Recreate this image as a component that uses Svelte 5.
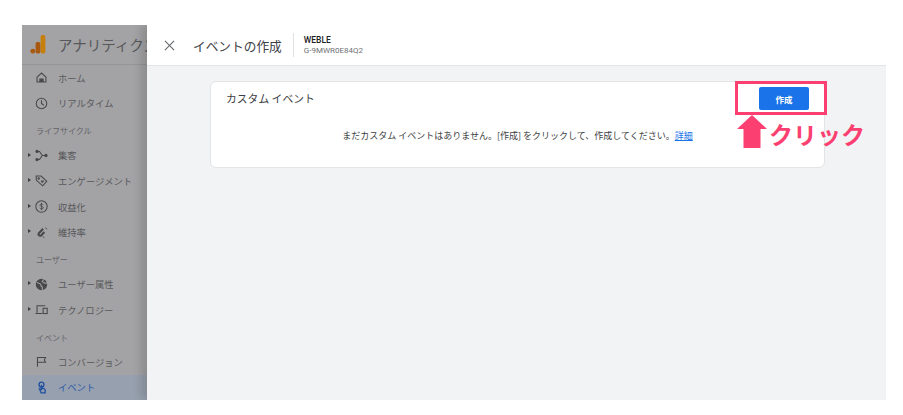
<script lang="ts">
  interface NavItem { kind: 'label' | 'item'; text: string; icon?: string; arrow?: boolean; active?: boolean }

  const nav: NavItem[] = [
    { kind: 'item', text: 'ホーム', icon: 'home' },
    { kind: 'item', text: 'リアルタイム', icon: 'clock' },
    { kind: 'label', text: 'ライフサイクル' },
    { kind: 'item', text: '集客', icon: 'acq', arrow: true },
    { kind: 'item', text: 'エンゲージメント', icon: 'tag', arrow: true },
    { kind: 'item', text: '収益化', icon: 'dollar', arrow: true },
    { kind: 'item', text: '維持率', icon: 'magnet', arrow: true },
    { kind: 'label', text: 'ユーザー' },
    { kind: 'item', text: 'ユーザー属性', icon: 'globe', arrow: true },
    { kind: 'item', text: 'テクノロジー', icon: 'devices', arrow: true },
    { kind: 'label', text: 'イベント' },
    { kind: 'item', text: 'コンバージョン', icon: 'flag' },
    { kind: 'item', text: 'イベント', icon: 'touch', active: true },
  ];
</script>

<div class="shot">
  <aside class="sidebar">
    <div class="brand">
      <svg class="logo" viewBox="0 0 18 22" width="16" height="19">
        <rect x="12" y="0" width="5.500" height="21.500" rx="2" fill="#c77f0c" />
        <rect x="6.200" y="8" width="5.500" height="13.500" rx="2" fill="#a8590f" />
        <circle cx="3" cy="18.700" r="2.800" fill="#a8590f" />
      </svg>
      <span class="brand-name">アナリティクス</span>
    </div>
    <nav class="nav">
      {#each nav as n}
        {#if n.kind === 'label'}
          <div class="nav-label">{n.text}</div>
        {:else}
          <div class="nav-item" class:active={n.active}>
            {#if n.arrow}<span class="caret"></span>{/if}
            <svg class="nav-icon" viewBox="0 0 16 16" width="13" height="13" fill="none" stroke="currentColor" stroke-width="1.300">
              {#if n.icon === 'home'}
                <path d="M2.500 7.500 8 2.500l5.500 5v6h-11z" /><path d="M6 13.500V10h4v3.500" fill="currentColor" />
              {:else if n.icon === 'clock'}
                <circle cx="8" cy="8" r="6.500" /><path d="M8 4V8l2.800 2.200" />
              {:else if n.icon === 'acq'}
                <path d="M3 3h2.500L9 8l-3.500 5H3M9 8h4" /><circle cx="13.500" cy="8" r="1.400" fill="currentColor" /><circle cx="2.500" cy="3" r="1.400" fill="currentColor" /><circle cx="2.500" cy="13" r="1.400" fill="currentColor" />
              {:else if n.icon === 'tag'}
                <path d="M1.500 2.500h6l7 6.500-5 5.500-8-7z" /><circle cx="4.500" cy="5.500" r=".8" fill="currentColor" /><path d="M7 9l2 2 2.200-2.200-1.200-1-.9.800-.9-.800z" fill="currentColor" stroke="none" />
              {:else if n.icon === 'dollar'}
                <circle cx="8" cy="8" r="7" /><path d="M10.200 6C9.900 4.800 6 4.400 6 6.400c0 2 4.200 1 4.200 3.200 0 1.900-3.800 1.500-4.300.2M8 3.500v9" stroke-width="1" />
              {:else if n.icon === 'magnet'}
                <path d="M10 3.500 5 8.500c-2 2 .8 4.800 2.800 2.800l3.700-3.800" stroke-width="2.600" /><path d="M13 2l1.600 2M9.500 13l2 1.500" stroke-width="1.200" />
              {:else if n.icon === 'globe'}
                <circle cx="8" cy="8" r="7" fill="currentColor" stroke="none" /><path d="M2.500 5.500 7 7.500l.5 2.500 1.500 1v4M10.500 1.500 9 4.500l3 2 3-.5" stroke="#a3a3a5" />
              {:else if n.icon === 'devices'}
                <path d="M2.500 12V3.500h10M.5 13h8.500" /><rect x="10" y="6.500" width="5" height="6.500" />
              {:else if n.icon === 'flag'}
                <path d="M3 14.500V3h10l-1.500 3 1.500 3H3" />
              {:else if n.icon === 'touch'}
                <circle cx="8" cy="4.500" r="3" stroke-width="1.600" /><path d="M8 4.500v6l-2.500-.8 2 4.800h5v-3.500c0-1-1-1.500-2-1.700L8 8.500" stroke-width="1.600" />
              {/if}
            </svg>
            <span>{n.text}</span>
          </div>
        {/if}
      {/each}
    </nav>
  </aside>

  <main class="panel">
    <header class="head">
      <svg class="close" viewBox="0 0 12 12" width="11" height="11" fill="none" stroke="#5f6368" stroke-width="1.100">
        <path d="M1 1l10 10M11 1 1 11" />
      </svg>
      <h1>イベントの作成</h1>
      <div class="prop">
        <strong>WEBLE</strong>
        <small>G-9MWR0E84Q2</small>
      </div>
    </header>
    <section class="body">
      <div class="card">
        <div class="card-top">
          <h2>カスタム イベント</h2>
          <button type="button">作成</button>
        </div>
        <p>まだカスタム イベントはありません。[作成] をクリックして、作成してください。<a href="#top">詳細</a></p>
      </div>
    </section>
  </main>

  <div class="mark"></div>
  <svg class="arrow" viewBox="0 0 30 33" width="30" height="33"><path d="M15 0 30 14H23.500V33H6.500V14H0z" fill="#fb3f71" /></svg>
  <div class="click">クリック</div>
</div>

<style>
  :global(body) {
    margin: 0;
    background: #fff;
    font-family: "Noto Sans CJK JP", Roboto, sans-serif;
  }
  .shot {
    position: relative;
    display: flex;
    width: 864px;
    height: 375px;
    margin: 25px 0 0 22px;
    overflow: hidden;
  }
  .sidebar {
    width: 125px;
    flex-shrink: 0;
    background: #a3a3a5;
    color: #58585b;
    overflow: hidden;
  }
  .brand {
    display: flex;
    align-items: center;
    gap: 12px;
    height: 40px;
    padding-left: 8px;
    border-bottom: 1px solid #959597;
    box-sizing: border-box;
    white-space: nowrap;
  }
  .logo { flex-shrink: 0; }
  .brand-name { font-size: 14.500px; color: #58585b; }
  .nav-item {
    position: relative;
    display: flex;
    align-items: center;
    gap: 10px;
    height: 25.600px;
    padding-left: 13px;
    font-size: 9.300px;
    white-space: nowrap;
  }
  .nav-item.active { background: #97a0ae; color: #2a5aa8; }
  .nav-icon { flex-shrink: 0; color: #48484b; }
  .active .nav-icon { color: #1f4fa0; }
  .caret {
    position: absolute;
    left: 6px;
    top: 10px;
    border-left: 3.500px solid #3f3f42;
    border-top: 2.500px solid transparent;
    border-bottom: 2.500px solid transparent;
  }
  .nav-label {
    height: 26.400px;
    box-sizing: border-box;
    padding: 4px 0 0 14px;
    line-height: 22.400px;
    font-size: 8px;
    color: #626265;
  }
  .panel {
    flex: 1;
    display: flex;
    flex-direction: column;
    min-width: 0;
    box-shadow: -6px 0 8px rgba(0, 0, 0, 0.14);
    z-index: 1;
  }
  .head {
    display: flex;
    align-items: center;
    height: 41px;
    flex-shrink: 0;
    padding-left: 17px;
    background: #fff;
    border-bottom: 1px solid #e3e4e6;
    box-sizing: border-box;
  }
  .close { flex-shrink: 0; }
  h1 {
    margin: 0 0 0 18px;
    font-size: 12.700px;
    font-weight: 400;
    color: #3c4043;
  }
  .prop {
    display: flex;
    flex-direction: column;
    margin-left: 11px;
    padding-left: 10px;
    border-left: 1px solid #e0e0e0;
    height: 24px;
    justify-content: center;
    font-family: Roboto, sans-serif;
  }
  .prop strong { font-size: 8.500px; line-height: 11px; color: #202124; font-weight: 500; }
  .prop small { font-size: 8px; line-height: 10px; color: #6f7276; }
  .body {
    flex: 1;
    background: #f1f3f4;
    padding: 15px 0 0 63px;
  }
  .card {
    width: 615px;
    height: 87px;
    box-sizing: border-box;
    background: #fff;
    border: 1px solid #e3e4e6;
    border-radius: 6px;
    padding: 8px 15px 0;
  }
  .card-top {
    display: flex;
    justify-content: space-between;
    align-items: flex-start;
  }
  h2 {
    margin: 0;
    font-size: 10.800px;
    line-height: 16px;
    font-weight: 400;
    color: #3c4043;
  }
  button {
    width: 50px;
    height: 23px;
    margin: -3px 0 0 0;
    border: 0;
    border-radius: 2px;
    background: #1a73e8;
    color: #fff;
    font: 700 8.500px "Noto Sans CJK JP", sans-serif;
  }
  p {
    margin: 19px 0 0;
    text-align: center;
    font-size: 9px;
    line-height: 14px;
    color: #3c4043;
    white-space: nowrap;
  }
  a { color: #1a73e8; }
  .mark {
    position: absolute;
    left: 713px;
    top: 56px;
    width: 92px;
    height: 34px;
    box-sizing: border-box;
    border: 3px solid #fb3f71;
    z-index: 2;
  }
  .arrow { position: absolute; left: 715px; top: 90px; z-index: 2; }
  .click {
    position: absolute;
    left: 747px;
    top: 94px;
    font-size: 24px;
    line-height: 30px;
    font-weight: 700;
    color: #fb3f71;
    z-index: 2;
  }
</style>
